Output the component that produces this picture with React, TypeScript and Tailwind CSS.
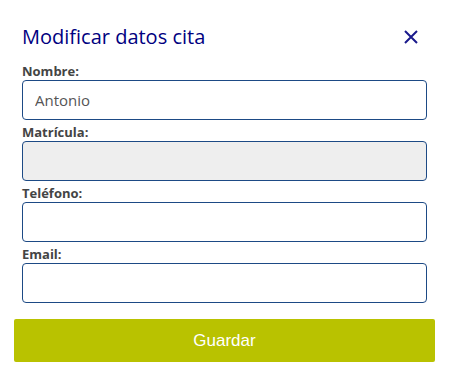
import { useState } from "react"

interface FieldProps {
  label: string
  value: string
  onChange?: (v: string) => void
  disabled?: boolean
}

function Field({ label, value, onChange, disabled }: FieldProps) {
  return (
    <div className="flex flex-col">
      <label className="text-[13px] leading-[16px] font-bold text-[#444444] mb-[1px]">{label}</label>
      <input
        value={value}
        disabled={disabled}
        onChange={(e) => onChange?.(e.target.value)}
        className={`h-[40px] w-full rounded-[4px] border border-[#1d4a85] px-[12px] text-[15px] text-[#555555] outline-none ${disabled ? "bg-[#eeeeee]" : "bg-white"}`}
      />
    </div>
  )
}

export default function App() {
  const [nombre, setNombre] = useState("Antonio")
  const [telefono, setTelefono] = useState("")
  const [email, setEmail] = useState("")

  return (
    <div className="w-[449px] h-[379px] bg-white font-['Open_Sans',sans-serif]">
      <div className="px-[22px] pt-[23px]">
        {/* Header */}
        <div className="flex items-center justify-between h-[28px] mb-[12px]">
          <h2 className="text-[20px] leading-[28px] text-[#000080]">Modificar datos cita</h2>
          <button className="mr-[9px] text-[#1a1a8c]">
            <svg width="14" height="14" viewBox="0 0 14 14" fill="none" stroke="currentColor" strokeWidth="2">
              <path d="M1 1 L13 13 M13 1 L1 13" />
            </svg>
          </button>
        </div>

        <div className="flex flex-col gap-[4px]">
          <Field label="Nombre:" value={nombre} onChange={setNombre} />
          <Field label="Matrícula:" value="" disabled />
          <Field label="Teléfono:" value={telefono} onChange={setTelefono} />
          <Field label="Email:" value={email} onChange={setEmail} />
        </div>
      </div>

      <div className="px-[14px] pt-[16px]">
        <button className="w-full h-[43px] rounded-[2px] bg-[#b9c200] text-white text-[17px] font-['Liberation_Sans',sans-serif]">
          Guardar
        </button>
      </div>
    </div>
  )
}
